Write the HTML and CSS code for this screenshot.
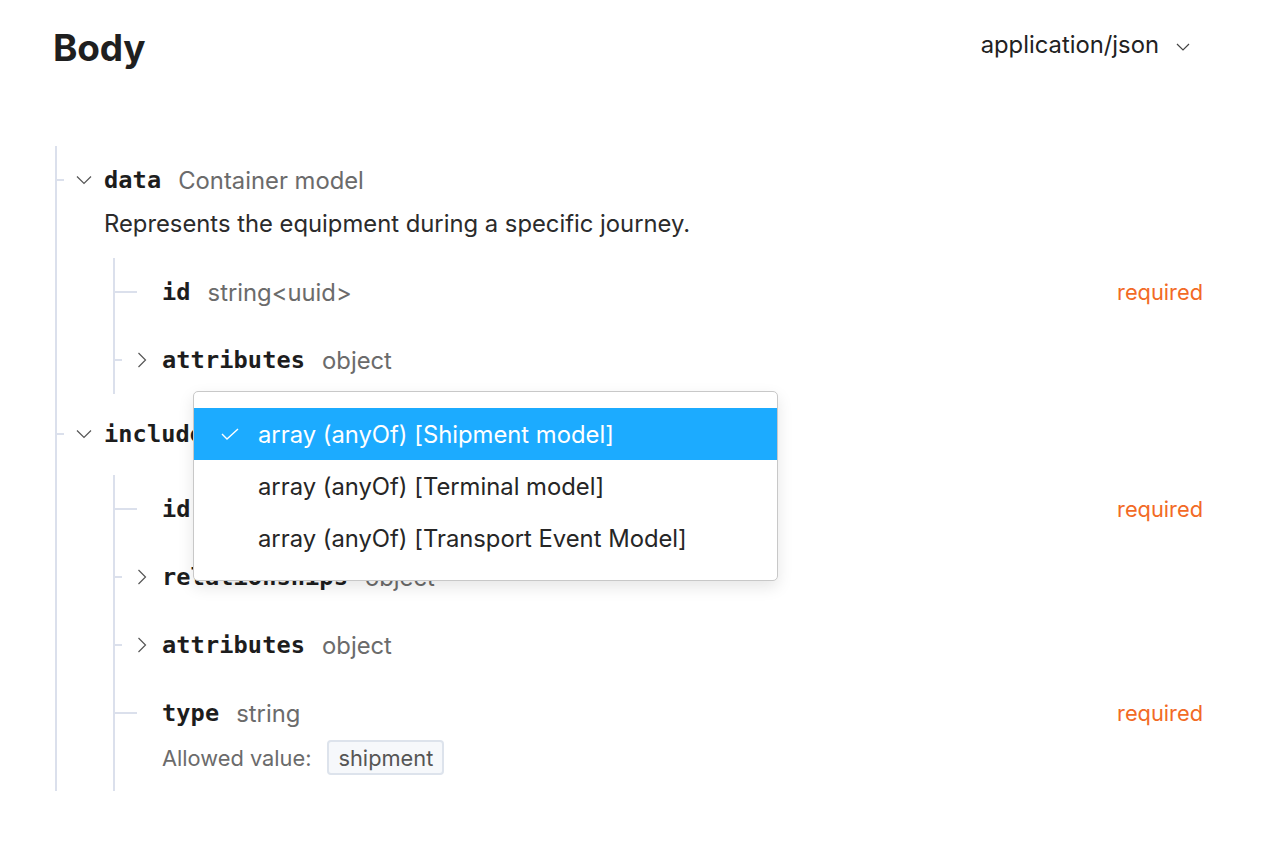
FILE: index.html
```html
<!DOCTYPE html>
<html>
<head>
<meta charset="utf-8">
<link rel="stylesheet" href="styles.css">
</head>
<body>
<div class="page">
  <header class="head">
    <h1 class="title">Body</h1>
    <div class="media">
      <span>application/json</span>
      <svg class="chev-sm" width="14" height="8" viewBox="0 0 14 8"><path d="M1 1l6 6 6-6" fill="none" stroke="#444" stroke-width="1.2"/></svg>
    </div>
  </header>

  <div class="tree">
    <div class="node">
      <div class="row outer-row">
        <span class="tick short"></span>
        <svg class="chev" width="16" height="10" viewBox="0 0 16 10"><path d="M1 1.5l7 7 7-7" fill="none" stroke="#555" stroke-width="1.2"/></svg>
        <span class="name">data</span><span class="type">Container model</span>
      </div>
      <p class="desc">Represents the equipment during a specific journey.</p>
      <div class="subtree first">
        <div class="prop">
          <div class="row inner-row">
            <span class="tick long"></span>
            <span class="name">id</span><span class="type">string&lt;uuid&gt;</span>
            <span class="req">required</span>
          </div>
        </div>
        <div class="prop">
          <div class="row inner-row">
            <span class="tick short"></span>
            <svg class="chev-r" width="10" height="16" viewBox="0 0 10 16"><path d="M1.5 1l7 7-7 7" fill="none" stroke="#555" stroke-width="1.2"/></svg>
            <span class="name">attributes</span><span class="type">object</span>
          </div>
        </div>
      </div>
    </div>

    <div class="node">
      <div class="row outer-row included">
        <span class="tick short"></span>
        <svg class="chev" width="16" height="10" viewBox="0 0 16 10"><path d="M1 1.5l7 7 7-7" fill="none" stroke="#555" stroke-width="1.2"/></svg>
        <span class="name">included</span><span class="type">array (anyOf)</span>
      </div>
      <div class="subtree second">
        <div class="prop">
          <div class="row inner-row">
            <span class="tick long"></span>
            <span class="name">id</span><span class="type">string</span>
            <span class="req">required</span>
          </div>
        </div>
        <div class="prop">
          <div class="row inner-row">
            <span class="tick short"></span>
            <svg class="chev-r" width="10" height="16" viewBox="0 0 10 16"><path d="M1.5 1l7 7-7 7" fill="none" stroke="#555" stroke-width="1.2"/></svg>
            <span class="name">relationships</span><span class="type">object</span>
          </div>
        </div>
        <div class="prop">
          <div class="row inner-row">
            <span class="tick short"></span>
            <svg class="chev-r" width="10" height="16" viewBox="0 0 10 16"><path d="M1.5 1l7 7-7 7" fill="none" stroke="#555" stroke-width="1.2"/></svg>
            <span class="name">attributes</span><span class="type">object</span>
          </div>
        </div>
        <div class="prop last">
          <div class="row inner-row">
            <span class="tick long"></span>
            <span class="name">type</span><span class="type">string</span>
            <span class="req">required</span>
          </div>
          <div class="allowed">
            <span class="allowed-label">Allowed value:</span>
            <span class="badge">shipment</span>
          </div>
        </div>
      </div>
    </div>

    <div class="menu">
      <div class="item selected">
        <svg class="check" width="18" height="12" viewBox="0 0 18 12"><path d="M1 6l5 5L17 1" fill="none" stroke="#fff" stroke-width="1.4"/></svg>
        <span>array (anyOf) [Shipment model]</span>
      </div>
      <div class="item"><span>array (anyOf) [Terminal model]</span></div>
      <div class="item"><span>array (anyOf) [Transport Event Model]</span></div>
    </div>
  </div>
</div>
</body>
</html>
```

FILE: styles.css
```css
* { box-sizing: border-box; }
html, body { margin: 0; padding: 0; background: #fff; }
body {
  font-family: Inter, "Noto Sans", sans-serif;
  color: #262626;
  font-size: 20px;
}
.page {
  padding: 26px 71px 0 53px;
  width: 1274px;
  height: 848px;
  overflow: hidden;
}
.head {
  display: flex;
  justify-content: space-between;
  align-items: flex-start;
  height: 120px;
}
.title {
  margin: 0;
  font-size: 37px;
  font-weight: 700;
  line-height: 44px;
  letter-spacing: -0.2px;
  color: #1f1f1f;
}
.media {
  display: flex;
  align-items: center;
  gap: 17px;
  margin-right: 13px;
  margin-top: 3px;
  font-size: 23.8px;
  line-height: 32px;
  color: #222;
}
.chev-sm { margin-top: 3px; }

.tree {
  position: relative;
  margin-left: 2px;
  border-left: 2px solid #dbe0ec;
  padding-top: 14px;
}
.row {
  position: relative;
  display: flex;
  align-items: center;
  height: 40px;
}
.tick {
  position: absolute;
  left: 0;
  top: 19px;
  height: 2px;
  background: #dbe0ec;
}
.tick.short { width: 9px; }
.tick.long { width: 24px; }
.outer-row { padding-left: 19px; }
.outer-row .tick { left: -2px; }
.chev { margin-right: 12px; }
.name {
  font-family: "DejaVu Sans Mono", "Liberation Mono", monospace;
  font-weight: 700;
  font-size: 23.6px;
  color: #1d1d1d;
  letter-spacing: 0.1px;
}
.type {
  margin-left: 17px;
  color: #6b6b6b;
  font-size: 23.8px;
}
.req {
  margin-left: auto;
  color: #f26a25;
  font-size: 21.8px;
}
.desc {
  margin: 10px 0 0 47px;
  line-height: 28px;
  font-size: 23.8px;
  color: #2b2b2b;
}
.subtree {
  position: relative;
  margin-left: 56px;
  border-left: 2px solid #dbe0ec;
}
.subtree.first { margin-top: 20px; }
.subtree.second { margin-top: 21px; }
.included { margin-top: 20px; }
.prop { padding: 14px 0; }
.prop.last { padding-bottom: 16px; }
.inner-row { padding-left: 47px; }
.inner-row .tick { left: -2px; }
.inner-row .chev-r { position: absolute; left: 22px; top: 12px; }
.allowed {
  display: flex;
  align-items: center;
  margin-top: 7px;
  padding-left: 47px;
  height: 35px;
  color: #6b6b6b;
  font-size: 21.8px;
}
.badge {
  margin-left: 16px;
  height: 35px;
  padding: 0 9px;
  display: flex;
  align-items: center;
  border: 2px solid #dde3ec;
  background: #f6f8fb;
  border-radius: 4px;
  color: #555;
}

.menu {
  position: absolute;
  left: 136px;
  top: 245px;
  width: 585px;
  height: 190px;
  background: #fff;
  border: 1px solid #c8c8c8;
  border-radius: 5px;
  box-shadow: 0 6px 16px rgba(0,0,0,0.1);
  padding-top: 16px;
}
.item {
  display: flex;
  align-items: center;
  height: 52px;
  padding-left: 64px;
  font-size: 23.8px;
  color: #262626;
  position: relative;
}
.item.selected {
  background: #1cabff;
  color: #fff;
}
.check { position: absolute; left: 27px; top: 20px; }
```
